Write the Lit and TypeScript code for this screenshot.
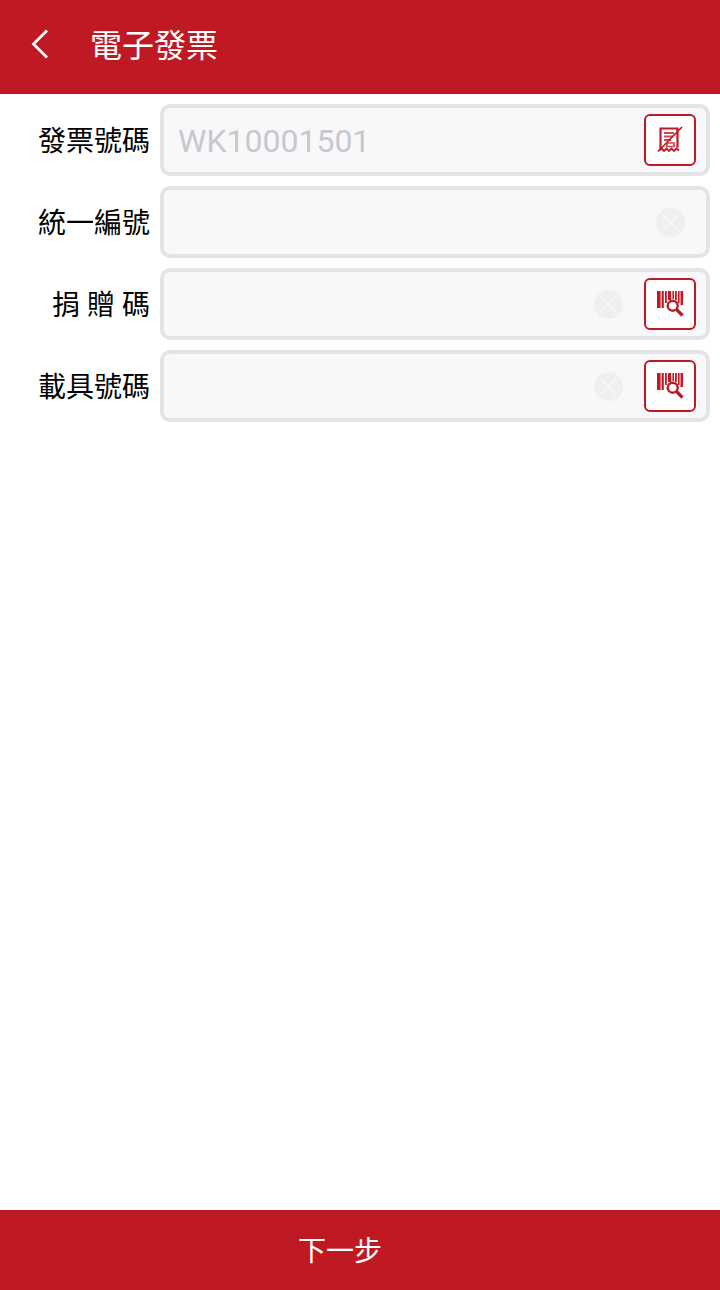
import { LitElement, css, html, svg } from 'lit';
import { customElement } from 'lit/decorators.js';

type Action = 'invoice' | 'barcode' | null;

interface Field {
    label: string;
    value?: string;
    clear?: boolean;
    action: Action;
}

const fields: Field[] = [
    { label: '發票號碼', value: 'WK10001501', action: 'invoice' },
    { label: '統一編號', clear: true, action: null },
    { label: '捐 贈 碼', clear: true, action: 'barcode' },
    { label: '載具號碼', clear: true, action: 'barcode' },
];

const invoiceIcon = svg`
    <svg class="icon" viewBox="0 0 28 28" fill="none" stroke="#bf1a24">
        <path d="M4.500 23V2.500h17v19" stroke-width="2.200" />
        <path d="M8 7h10M8 10.500h9M8 14h7" stroke-width="1.800" stroke-opacity="0.8" />
        <path d="M11 17h7v3.500h-7z" stroke-width="1.700" stroke-opacity="0.8" />
        <path d="M2 25.500L26 1" stroke-width="1.700" />
        <path d="M3 24.500l2.500-2 2.500 2.500 2.500-2.500 2.500 2.500 2.500-2.500 2.500 2.500 2.500-2.500 2.500 2" stroke-width="1.900" />
    </svg>
`;

const barcodeIcon = svg`
    <svg class="icon" viewBox="0 0 28 28" fill="none" stroke="#bf1a24">
        <path d="M1 1h3.600v17H1zM5.600 1h2.200v17H5.600z" fill="#bf1a24" stroke="none" />
        <path d="M9 1h1.800v12H9zM12 1h3.200v9H12zM16.400 1h1.600v8h-1.600zM19 1h1.800v9H19zM22 1h1.600v12H22zM24.500 1H27v14h-2.500z" fill="#bf1a24" stroke="none" />
        <circle cx="16.700" cy="15.700" r="5" stroke-width="2.400" fill="#fff" />
        <path d="M20.500 19.500l6 6" stroke-width="3.200" />
    </svg>
`;

@customElement('app-root')
export class AppRoot extends LitElement {
    static styles = css`
        :host {
            display: flex;
            flex-direction: column;
            height: 1290px;
            background: #fff;
            font-family: 'Roboto', 'Noto Sans CJK TC', sans-serif;
        }

        .top {
            display: flex;
            align-items: center;
            height: 94px;
            flex: none;
            background: #bf1a24;
            color: #fff;
        }

        .back {
            display: block;
            width: 20px;
            height: 32px;
            margin: 0 0 6px 30px;
        }

        .title {
            margin: 0 0 0 40px;
            font-size: 32px;
            font-weight: 400;
            line-height: 44px;
            padding-bottom: 2px;
        }

        .form {
            flex: 1;
            display: flex;
            flex-direction: column;
            gap: 10px;
            padding: 10px 10px 0 0;
        }

        .row {
            display: grid;
            grid-template-columns: 150px 1fr;
            column-gap: 10px;
            align-items: center;
        }

        .label {
            text-align: right;
            font-size: 28px;
            line-height: 40px;
            padding-top: 4px;
            color: #000;
            white-space: pre;
        }

        .field {
            display: flex;
            align-items: center;
            gap: 21px;
            box-sizing: border-box;
            height: 72px;
            padding: 0 10px 0 14px;
            border: 4px solid #e4e4e6;
            border-radius: 10px;
            background: #f8f8fa;
        }

        .value {
            flex: 1;
            font-size: 32px;
            padding-top: 2px;
            color: #c8c8cc;
        }

        .clear {
            display: block;
            width: 29px;
            height: 29px;
            flex: none;
        }

        .clear.only {
            margin-right: 11px;
        }

        .action {
            display: flex;
            align-items: center;
            justify-content: center;
            width: 52px;
            height: 52px;
            flex: none;
            box-sizing: border-box;
            border: 2px solid #bf1a24;
            border-radius: 6px;
            background: #fff;
            padding: 0;
        }

        .icon {
            display: block;
            width: 28px;
            height: 28px;
        }

        .next {
            flex: none;
            height: 80px;
            border: 0;
            padding: 0 40px 2px 0;
            background: #bf1a24;
            color: #fff;
            font-family: inherit;
            font-size: 28px;
        }
    `;

    private renderClear(only: boolean) {
        return html`
            <svg class="clear ${only ? 'only' : ''}" viewBox="0 0 30 30" fill="none">
                <circle cx="15" cy="15" r="15" fill="#efeff1" />
                <path d="M7 7l16 16M23 7L7 23" stroke="#f8f8fa" stroke-width="1.500" />
            </svg>
        `;
    }

    private renderField(f: Field) {
        return html`
            <div class="row">
                <span class="label">${f.label}</span>
                <div class="field">
                    <span class="value">${f.value ?? ''}</span>
                    ${f.clear ? this.renderClear(!f.action) : ''}
                    ${f.action
                        ? html`<button class="action">${f.action === 'invoice' ? invoiceIcon : barcodeIcon}</button>`
                        : ''}
                </div>
            </div>
        `;
    }

    protected render() {
        return html`
            <header class="top">
                <svg class="back" viewBox="0 0 20 32" fill="none" stroke="#fff" stroke-width="2.700">
                    <path d="M17 2.500L3.500 16 17 29.500" />
                </svg>
                <h1 class="title">電子發票</h1>
            </header>
            <main class="form">${fields.map((f) => this.renderField(f))}</main>
            <button class="next">下一步</button>
        `;
    }
}
